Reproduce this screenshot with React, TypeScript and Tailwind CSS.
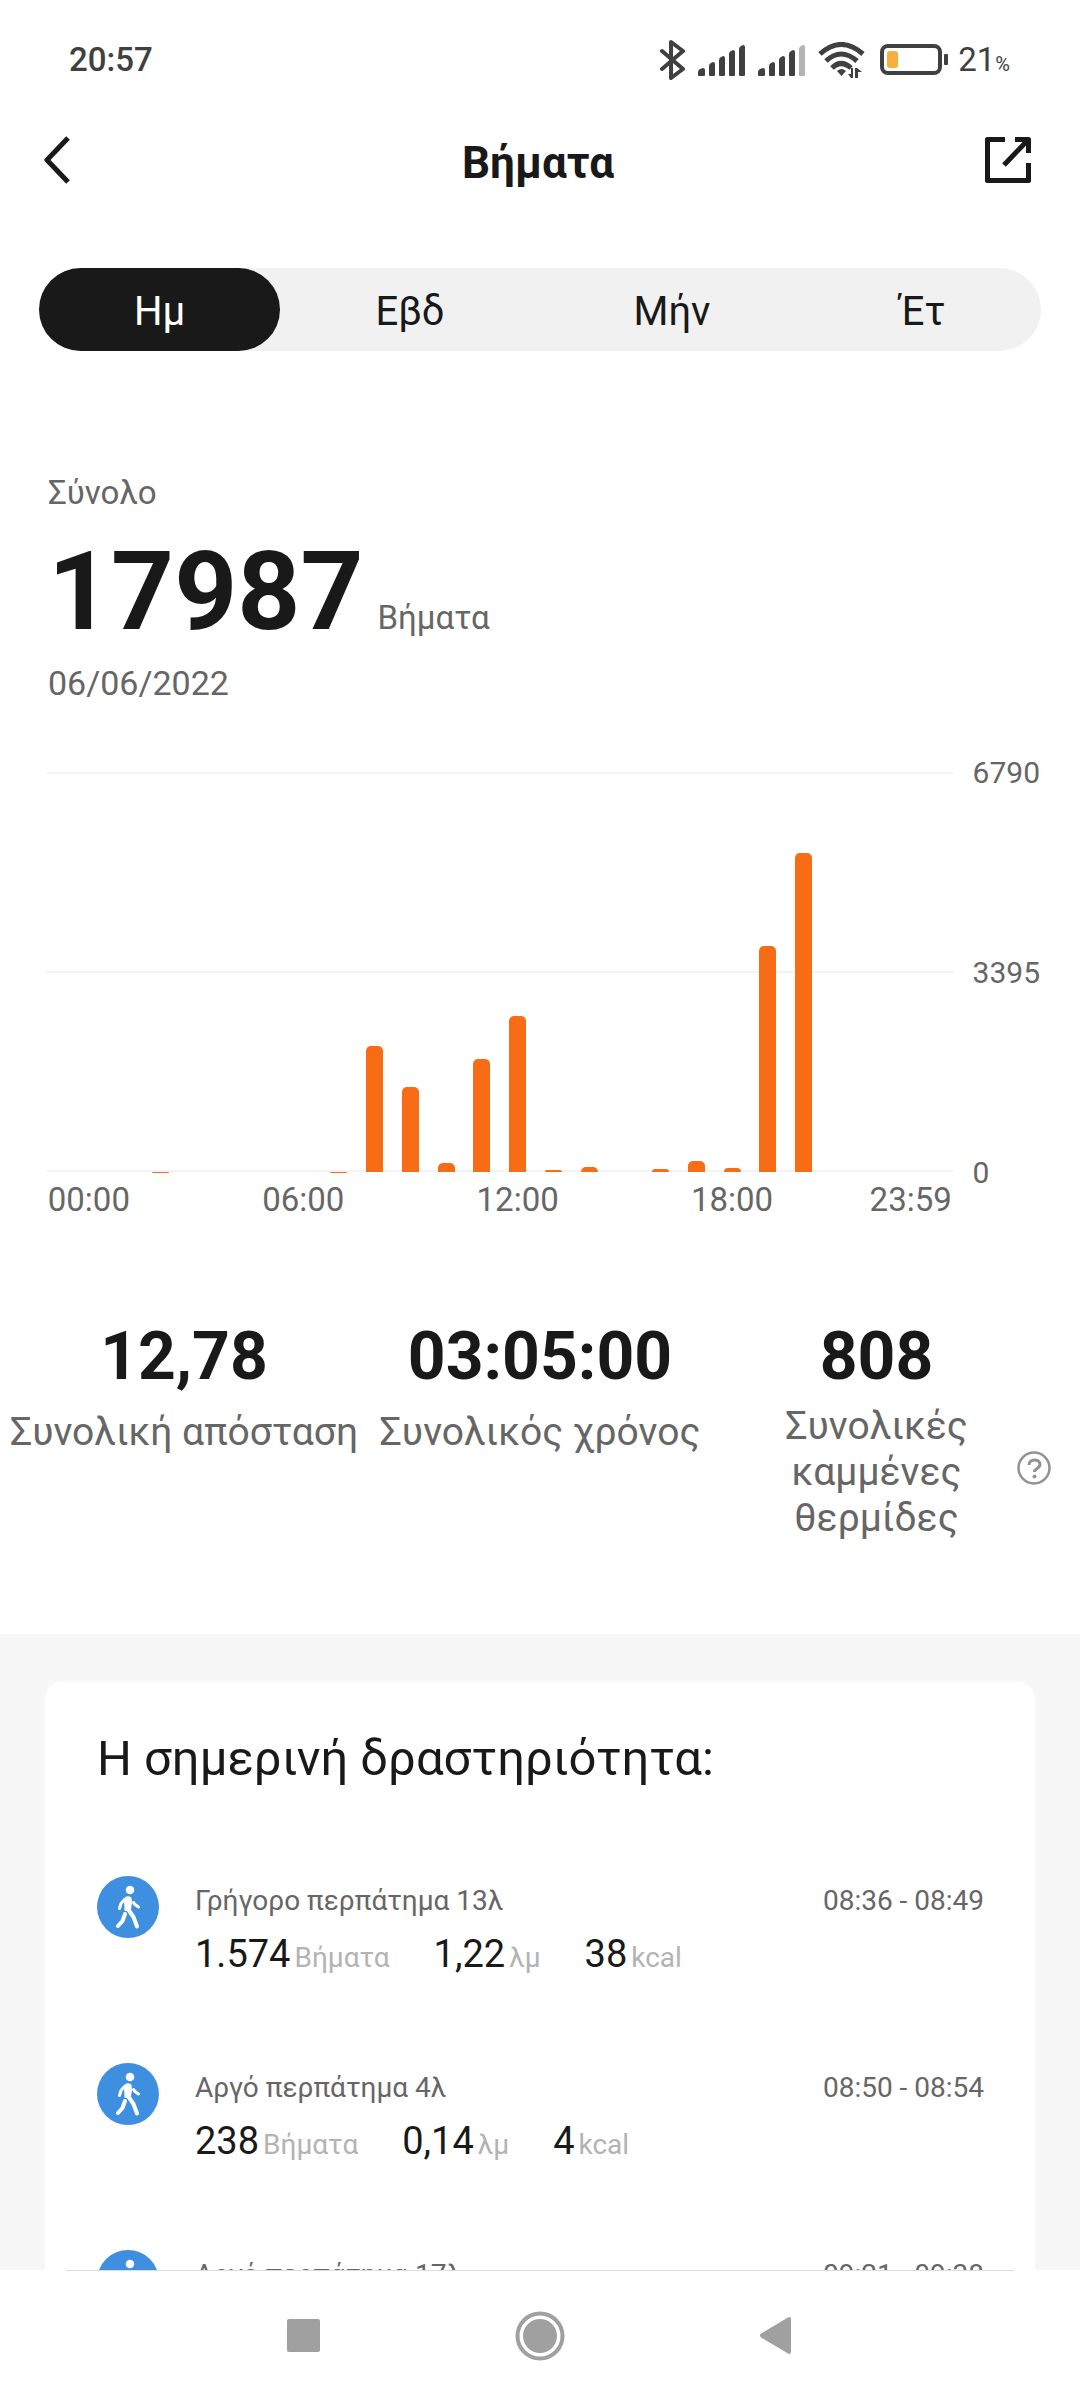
import { useState } from "react";

const MAX_STEPS = 6790;

// steps per hour, 00 to 23
const HOURS = [
  0, 0, 8, 0, 0, 0, 0, 8, 2140, 1450, 150, 1920, 2650, 34, 85, 0, 51, 187, 60, 3829, 5420, 0, 0, 0,
];

const HOUR_LABELS: Record<number, string> = {
  0: "00:00",
  6: "06:00",
  12: "12:00",
  18: "18:00",
  23: "23:59",
};

const TABS = ["Ημ", "Εβδ", "Μήν", "Έτ"];

interface Activity {
  title: string;
  time: string;
  steps: string;
  km: string;
  kcal: string;
}

const ACTIVITIES: Activity[] = [
  { title: "Γρήγορο περπάτημα 13λ", time: "08:36 - 08:49", steps: "1.574", km: "1,22", kcal: "38" },
  { title: "Αργό περπάτημα 4λ", time: "08:50 - 08:54", steps: "238", km: "0,14", kcal: "4" },
  { title: "Αργό περπάτημα 17λ", time: "09:21 - 09:38", steps: "1.102", km: "0,71", kcal: "22" },
];

function SignalIcon({ weak = false }: { weak?: boolean }) {
  return (
    <svg width="48" height="32" viewBox="0 0 48 32" fill="#404040" aria-hidden="true">
      <path d="M0 31v-3q0-2 2-3l3-1q2 0 2 2v5q0 1-1 1H1q-1 0-1-1z" />
      <path d="M11 31V22q0-2 2-3l2-1q2 0 2 2v11q0 1-1 1h-4q-1 0-1-1z" />
      <path d="M21 31V16q0-2 2-3l2-1q2 0 2 2v17q0 1-1 1h-4q-1 0-1-1z" />
      <path d="M31 31V10q0-2 2-3l2-1q2 0 2 2v23q0 1-1 1h-4q-1 0-1-1z" />
      <path
        d="M41 31V5q0-2 2-3l2-1q2 0 2 2v28q0 1-1 1h-4q-1 0-1-1z"
        fill={weak ? "#b3b3b3" : "#404040"}
      />
    </svg>
  );
}

function StatusBar() {
  return (
    <div className="flex h-[120px] items-center justify-between pr-[70px] pl-[69px] text-[33px] leading-10 text-[#404040]">
      <span className="font-medium">20:57</span>
      <div className="flex items-center">
        <svg width="26" height="40" viewBox="0 0 26 40" fill="none" stroke="#404040" strokeWidth="4" strokeLinecap="round" strokeLinejoin="round" aria-hidden="true">
          <path d="M2 11l21 18-12 9V2l12 9L2 29" />
        </svg>
        <div className="mx-3 flex gap-3">
          <SignalIcon />
          <SignalIcon weak />
        </div>
        <svg width="48" height="36" viewBox="0 0 48 36" fill="none" stroke="#404040" strokeWidth="5" aria-hidden="true">
          <path d="M2 12Q23-7 45 12" />
          <path d="M8 19Q23 5 39 19" />
          <path d="M14 26Q23 17 33 26" />
          <path d="M19 29q4.500-4 9 0l-4.500 5z" fill="#404040" stroke="none" />
          <path d="M35 26v10h-2l-3-4h3v-6zM37 36V26h2l5 4h-4v6z" fill="#404040" stroke="none" />
        </svg>
        <svg className="ml-[14px]" width="70" height="32" viewBox="0 0 70 32" aria-hidden="true">
          <rect x="2" y="2" width="58" height="27" rx="6" fill="none" stroke="#404040" strokeWidth="4" />
          <rect x="7" y="7" width="11" height="17" rx="3" fill="#f7b03c" />
          <rect x="64" y="10" width="4" height="11" rx="1" fill="#404040" />
        </svg>
        <span className="ml-2">
          21<span className="text-xl">%</span>
        </span>
      </div>
    </div>
  );
}

function Header() {
  return (
    <header className="grid h-20 grid-cols-[1fr_auto_1fr] items-center pr-12 pl-11">
      <button type="button" aria-label="Πίσω" className="justify-self-start">
        <svg width="27" height="50" viewBox="0 0 27 50" fill="none" stroke="#191919" strokeWidth="5" strokeLinejoin="round">
          <path d="M24 3L3 25l21 22" />
        </svg>
      </button>
      <h1 className="pt-[6px] text-[44px] leading-[52px] font-bold">Βήματα</h1>
      <button type="button" aria-label="Κοινοποίηση" className="justify-self-end">
        <svg width="48" height="48" viewBox="0 0 48 48" fill="none" stroke="#191919" strokeWidth="5" strokeLinejoin="round">
          <path d="M21 3.500H3.500v41h41V27" />
          <path d="M31 3.500h13.500V17M44 4L20 29" />
        </svg>
      </button>
    </header>
  );
}

function RangeTabs() {
  const [active, setActive] = useState(0);
  return (
    <div role="tablist" className="mx-[39px] mt-[68px] grid grid-cols-[241fr_260fr_264fr_237fr] rounded-full bg-[#f1f1f1]">
      {TABS.map((tab, i) => (
        <button
          key={tab}
          type="button"
          role="tab"
          aria-selected={i === active}
          onClick={() => setActive(i)}
          className={`h-[83px] rounded-full pt-1 text-[40px] ${i === active ? "bg-[#191919] text-white" : ""}`}
        >
          {tab}
        </button>
      ))}
    </div>
  );
}

function StepsChart() {
  return (
    <div className="mt-[69px] flex pr-10 pl-[47px]">
      <div className="min-w-0 flex-1">
        <div className="relative h-[400px]">
          <div className="flex h-full flex-col justify-between" aria-hidden="true">
            <div className="h-[2px] bg-[#f3f3f3]" />
            <div className="h-[2px] bg-[#f3f3f3]" />
            <div className="h-[2px] bg-[#f3f3f3]" />
          </div>
          <div className="absolute inset-0 grid grid-cols-24 items-end px-6">
            {HOURS.map((steps, hour) => (
              <div
                key={hour}
                className="mx-auto w-[17px] rounded-t-[5px] bg-[#f86c16]"
                style={{ height: `${(steps / MAX_STEPS) * 100}%` }}
              />
            ))}
          </div>
        </div>
        <div className="grid grid-cols-24 px-6 pt-2">
          {HOURS.map((_, hour) => (
            <div key={hour} className="flex h-10 justify-center text-[33px] leading-10 whitespace-nowrap text-[#666]">
              {HOUR_LABELS[hour]}
            </div>
          ))}
        </div>
      </div>
      <div className="-mt-5 ml-5 flex h-[442px] flex-col justify-between text-[30px] leading-[42px] text-[#666]">
        <span>6790</span>
        <span>3395</span>
        <span>0</span>
      </div>
    </div>
  );
}

function Totals() {
  return (
    <section className="mt-[99px] grid grid-cols-[368fr_344fr_368fr] text-center text-[39px] leading-[46px] text-[#666]">
      <div>
        <p className="text-[66px] leading-[76px] font-bold text-[#191919]">12,78</p>
        <p className="mt-[14px] whitespace-nowrap">Συνολική απόσταση</p>
      </div>
      <div>
        <p className="text-[66px] leading-[76px] font-bold text-[#191919]">03:05:00</p>
        <p className="mt-[14px] whitespace-nowrap">Συνολικός χρόνος</p>
      </div>
      <div className="grid grid-cols-[1fr_auto] items-center pr-[29px] pl-6">
        <p className="text-[66px] leading-[76px] font-bold text-[#191919]">808</p>
        <span />
        <p className="mt-2">Συνολικές καμμένες θερμίδες</p>
        <button type="button" aria-label="Βοήθεια">
          <svg width="34" height="34" viewBox="0 0 34 34" fill="none" stroke="#929292" strokeWidth="3">
            <circle cx="17" cy="17" r="15.500" strokeWidth="2.500" />
            <path d="M12 14c0-7 11-6.500 11-.5 0 4-5.500 4-5.500 7.500" />
            <circle cx="17.500" cy="25.500" r="2" fill="#929292" stroke="none" />
          </svg>
        </button>
      </div>
    </section>
  );
}

function WalkIcon() {
  return (
    <svg className="shrink-0" width="62" height="62" viewBox="0 0 62 62" aria-hidden="true">
      <circle cx="31" cy="31" r="31" fill="#3f8fe0" />
      <g fill="none" stroke="#fff" strokeLinecap="round" strokeLinejoin="round">
        <circle cx="33" cy="14" r="4.300" fill="#fff" stroke="none" />
        <path d="M28 22.500q3-2 5.500-.5l.5 5-1 6-4.500 1z" fill="#fff" strokeWidth="2" />
        <path d="M27.500 23.500l-3.500 4-1.500 5" strokeWidth="3" />
        <path d="M36.500 26.500l1.500 2 3.500 2.500" strokeWidth="3" />
        <path d="M31 33l5.500 8 3.500 9.500M28 38l-2.500 7-4.500 5" strokeWidth="4" />
      </g>
    </svg>
  );
}

function Metric({ value, unit }: { value: string; unit: string }) {
  return (
    <span className="flex items-baseline gap-1">
      <span className="text-[38px] text-[#191919]">{value}</span>
      <span className="text-[28px] text-[#b3b3b3]">{unit}</span>
    </span>
  );
}

function ActivityRow({ activity }: { activity: Activity }) {
  return (
    <li className="flex h-[187px] items-start">
      <WalkIcon />
      <div className="ml-9 flex-1">
        <div className="flex justify-between pt-2 text-[28px] leading-[34px] text-[#666]">
          <h3>{activity.title}</h3>
          <time>{activity.time}</time>
        </div>
        <div className="mt-[14px] flex gap-11 leading-[44px]">
          <Metric value={activity.steps} unit="Βήματα" />
          <Metric value={activity.km} unit="λμ" />
          <Metric value={activity.kcal} unit="kcal" />
        </div>
      </div>
    </li>
  );
}

function NavBar() {
  return (
    <nav className="shrink-0 bg-white">
      <div className="mx-[66px] h-px bg-[#dedede]" />
      <div className="flex h-[129px] items-center justify-center gap-[195px]">
        <button type="button" aria-label="Πρόσφατα">
          <svg width="33" height="33" viewBox="0 0 33 33" fill="#a0a0a0">
            <rect width="33" height="33" rx="2" />
          </svg>
        </button>
        <button type="button" aria-label="Αρχική">
          <svg width="50" height="50" viewBox="0 0 50 50" fill="#a0a0a0">
            <circle cx="25" cy="25" r="22.500" fill="none" stroke="#a0a0a0" strokeWidth="4" />
            <circle cx="25" cy="25" r="17" />
          </svg>
        </button>
        <button type="button" aria-label="Επιστροφή">
          <svg width="33" height="37" viewBox="0 0 33 37" fill="#a0a0a0">
            <path d="M28 .5q3-1.500 3 2v32q0 3.500-3 2L1 20.500q-2-2 0-4z" />
          </svg>
        </button>
      </div>
    </nav>
  );
}

export default function App() {
  return (
    <div className="flex h-screen flex-col bg-white font-[Roboto,sans-serif] text-[#191919]">
      <StatusBar />
      <Header />
      <main className="min-h-0 flex-1 overflow-y-auto [scrollbar-width:none]">
        <RangeTabs />
        <section className="mt-[122px] px-12 text-[33px] leading-10 text-[#666]">
          <p>Σύνολο</p>
          <p className="mt-[15px] flex items-baseline gap-[14px]">
            <span className="text-[110px] leading-[128px] font-bold text-[#191919]">17987</span>
            Βήματα
          </p>
          <p className="mt-[7px] text-[34px] leading-10">06/06/2022</p>
        </section>
        <StepsChart />
        <Totals />
        <section className="mt-[93px] bg-[#f7f7f7] px-[45px] pt-12">
          <div className="rounded-t-2xl bg-white pr-[51px] pl-[52px] pt-[47px]">
            <h2 className="text-[49px] leading-[60px]">Η σημερινή δραστηριότητα:</h2>
            <ul className="mt-[87px]">
              {ACTIVITIES.map((activity) => (
                <ActivityRow key={activity.time} activity={activity} />
              ))}
            </ul>
          </div>
        </section>
      </main>
      <NavBar />
    </div>
  );
}
